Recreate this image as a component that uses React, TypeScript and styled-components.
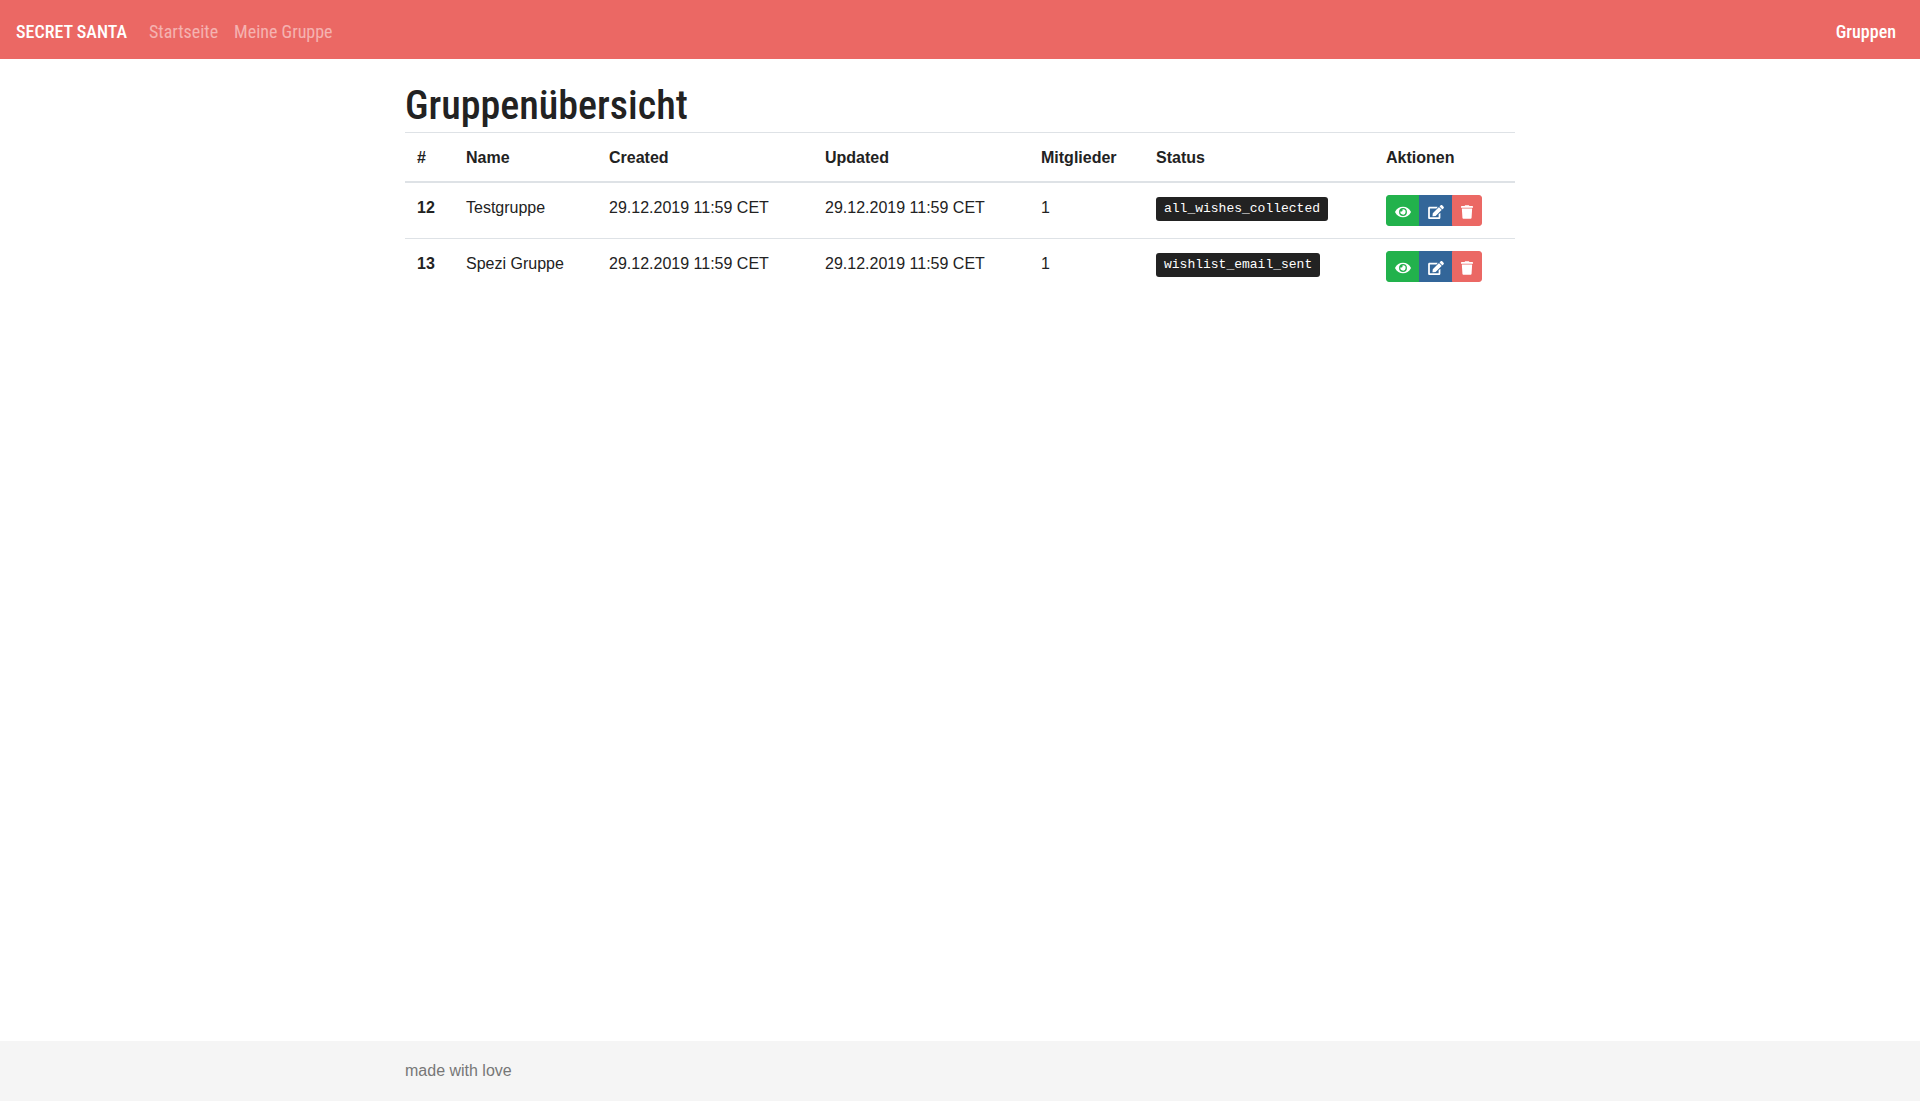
import React from "react";
import styled, { createGlobalStyle } from "styled-components";
import { FaEdit, FaEye } from "react-icons/fa";

const GlobalStyle = createGlobalStyle`
  *, *::before, *::after { box-sizing: border-box; }
  body {
    margin: 0;
    font-family: "Liberation Sans", Arial, sans-serif;
    font-size: 16px;
    line-height: 24px;
    color: #222;
    background: #fff;
  }
`;

const headingFont = `"Roboto Condensed", "Liberation Sans Narrow", "Arial Narrow", sans-serif`;

const Page = styled.div`
  display: flex;
  flex-direction: column;
  min-height: 100vh;
`;

const Navbar = styled.nav`
  display: flex;
  align-items: center;
  min-height: 59px;
  padding: 4px 16px 0;
  background: #eb6864;
  font-family: ${headingFont};
  font-size: 18px;
  font-weight: 500;
  line-height: 27px;
`;

const Brand = styled.a`
  margin-right: 14px;
  color: #fff;
  text-decoration: none;
  text-transform: uppercase;
`;

const NavList = styled.ul<{ $end?: boolean }>`
  display: flex;
  margin: 0;
  margin-left: ${(p) => (p.$end ? "auto" : "0")};
  padding: 0;
  list-style: none;
`;

const NavLink = styled.a<{ $active?: boolean }>`
  display: block;
  padding: 7px 8px 8px;
  color: ${(p) => (p.$active ? "#fff" : "rgba(255, 255, 255, 0.5)")};
  font-weight: ${(p) => (p.$active ? "500" : "400")};
  text-decoration: none;
`;

const Container = styled.div`
  width: 100%;
  max-width: 1140px;
  margin: 0 auto;
  padding: 0 15px;
`;

const Main = styled.main`
  flex: 1;
  padding-top: 24px;
`;

const Title = styled.h1`
  margin: 0;
  padding-bottom: 4px;
  font-family: ${headingFont};
  font-size: 40px;
  font-weight: 500;
  line-height: 45px;
`;

const Table = styled.table`
  width: 100%;
  border-collapse: collapse;
  line-height: 26px;
`;

const Cell = styled.td`
  padding: 12px;
  border-top: 1px solid #dee2e6;
  vertical-align: top;
`;

const HeadCell = styled.th<{ $width: number }>`
  width: ${(p) => p.$width}px;
  padding: 12px 12px 10px;
  border-top: 1px solid #dee2e6;
  border-bottom: 2px solid #dee2e6;
  text-align: left;
  vertical-align: bottom;
`;

const RowHead = styled(Cell)`
  font-weight: 700;
  text-align: left;
`;

const StatusTag = styled.kbd`
  display: inline-block;
  margin-top: 2px;
  padding: 0 8px;
  border-radius: 3px;
  background: #222;
  color: #fff;
  font-family: "Liberation Mono", "Courier New", monospace;
  font-size: 13px;
  line-height: 24px;
  vertical-align: top;
`;

const ButtonGroup = styled.div`
  display: flex;
`;

const ActionButton = styled.button<{ $color: string; $iconWidth: number }>`
  display: flex;
  align-items: center;
  height: 31px;
  padding: 2px 8px 0;
  border: 1px solid ${(p) => p.$color};
  background: ${(p) => p.$color};
  color: #fff;
  cursor: pointer;

  & + & { margin-left: -1px; }
  &:first-child { border-radius: 3px 0 0 3px; }
  &:last-child { border-radius: 0 3px 3px 0; }

  svg {
    width: ${(p) => p.$iconWidth}px;
    height: 14px;
  }
`;

const Footer = styled.footer`
  background: #f5f5f5;
  color: #777;
  line-height: 60px;
`;

function TrashIcon() {
  return (
    <svg viewBox="0 0 448 512" fill="currentColor" aria-hidden="true">
      <path d="M0 84V56c0-13.3 10.7-24 24-24h112l9.4-18.7c4-8.2 12.3-13.3 21.4-13.3h114.3c9.1 0 17.4 5.1 21.5 13.3L312 32h112c13.3 0 24 10.7 24 24v28c0 6.6-5.4 12-12 12H12C5.4 96 0 90.6 0 84zm415.2 56.7L394.8 467c-1.6 25.3-22.6 45-47.9 45H101.1c-25.3 0-46.3-19.7-47.9-45L32.8 140.7c-.4-6.9 5.1-12.7 12-12.7h358.5c6.8 0 12.3 5.8 11.9 12.7z" />
    </svg>
  );
}

const columns = [
  { label: "#", width: 49 },
  { label: "Name", width: 143 },
  { label: "Created", width: 216 },
  { label: "Updated", width: 216 },
  { label: "Mitglieder", width: 115 },
  { label: "Status", width: 230 },
  { label: "Aktionen", width: 141 },
];

const groups = [
  { id: 12, name: "Testgruppe", created: "29.12.2019 11:59 CET", updated: "29.12.2019 11:59 CET", members: 1, status: "all_wishes_collected" },
  { id: 13, name: "Spezi Gruppe", created: "29.12.2019 11:59 CET", updated: "29.12.2019 11:59 CET", members: 1, status: "wishlist_email_sent" },
];

const actions = [
  { label: "Anzeigen", color: "#22b24c", Icon: FaEye, width: 16 },
  { label: "Bearbeiten", color: "#336699", Icon: FaEdit, width: 16 },
  { label: "Löschen", color: "#eb6864", Icon: TrashIcon, width: 12 },
];

export default function App() {
  return (
    <Page>
      <GlobalStyle />
      <Navbar>
        <Brand href="#">Secret Santa</Brand>
        <NavList>
          <li><NavLink href="#">Startseite</NavLink></li>
          <li><NavLink href="#">Meine Gruppe</NavLink></li>
        </NavList>
        <NavList $end>
          <li><NavLink href="#" $active>Gruppen</NavLink></li>
        </NavList>
      </Navbar>
      <Main>
        <Container>
          <Title>Gruppenübersicht</Title>
          <Table>
            <thead>
              <tr>
                {columns.map((c) => (
                  <HeadCell key={c.label} scope="col" $width={c.width}>{c.label}</HeadCell>
                ))}
              </tr>
            </thead>
            <tbody>
              {groups.map((g) => (
                <tr key={g.id}>
                  <RowHead as="th" scope="row">{g.id}</RowHead>
                  <Cell>{g.name}</Cell>
                  <Cell>{g.created}</Cell>
                  <Cell>{g.updated}</Cell>
                  <Cell>{g.members}</Cell>
                  <Cell><StatusTag>{g.status}</StatusTag></Cell>
                  <Cell>
                    <ButtonGroup role="group">
                      {actions.map(({ label, color, Icon, width }) => (
                        <ActionButton key={label} type="button" $color={color} $iconWidth={width} aria-label={label}>
                          <Icon />
                        </ActionButton>
                      ))}
                    </ButtonGroup>
                  </Cell>
                </tr>
              ))}
            </tbody>
          </Table>
        </Container>
      </Main>
      <Footer>
        <Container>made with love</Container>
      </Footer>
    </Page>
  );
}
